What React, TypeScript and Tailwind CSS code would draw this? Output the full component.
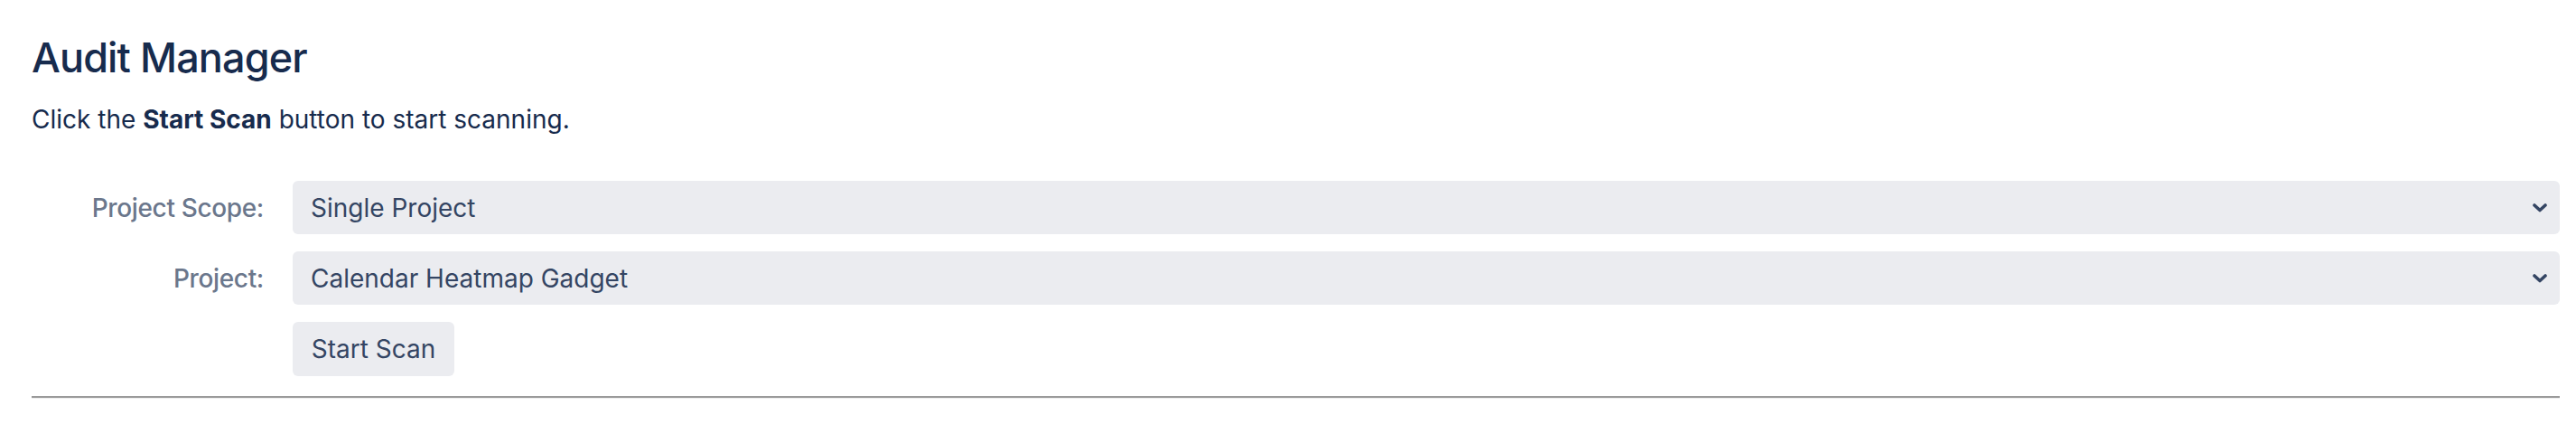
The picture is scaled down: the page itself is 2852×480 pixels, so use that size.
import React from "react";

function Chevron() {
  return (
    <svg width="16" height="10" viewBox="0 0 16 10" className="shrink-0">
      <path d="M2 2 L8 7.5 L14 2" fill="none" stroke="#344563" strokeWidth="3.6" strokeLinecap="round" strokeLinejoin="round" />
    </svg>
  );
}

function Row({ label, children }: { label: string; children: React.ReactNode }) {
  return (
    <div className="flex items-center gap-[32px]">
      <div className="w-[257px] shrink-0 text-right text-[28px] leading-[40px] font-medium tracking-[-0.35px] text-[#6B778C]">{label}</div>
      <div className="flex-1 min-w-0">{children}</div>
    </div>
  );
}

function SelectBox({ value }: { value: string }) {
  return (
    <div className="flex h-[59px] items-center justify-between rounded-[6px] bg-[#EBECF0] pl-[20px] pr-[14px]">
      <span className="text-[28px] leading-[40px] text-[#344563]">{value}</span>
      <Chevron />
    </div>
  );
}

export default function App() {
  return (
    <div className="min-h-[480px] bg-white pl-[35px] pr-[18px] pt-[36px]" style={{ fontFamily: "Inter, 'Noto Sans', sans-serif" }}>
      <h1 className="text-[45px] leading-[56px] font-medium text-[#172B4D] tracking-[-0.9px]">Audit Manager</h1>
      <p className="mt-[20px] text-[28px] leading-[40px] text-[#172B4D]">
        Click the <strong className="font-bold">Start Scan</strong> button to start scanning.
      </p>
      <div className="mt-[48px] flex flex-col gap-[19px]">
        <Row label="Project Scope:">
          <SelectBox value="Single Project" />
        </Row>
        <Row label="Project:">
          <SelectBox value="Calendar Heatmap Gadget" />
        </Row>
        <div className="flex gap-[32px]">
          <div className="w-[257px] shrink-0" />
          <button className="flex h-[60px] w-[179px] items-center justify-center rounded-[6px] bg-[#EBECF0] text-[28px] leading-[40px] text-[#344563]">
            Start Scan
          </button>
        </div>
      </div>
      <div className="mt-[22px] h-[3px] border-t-2 border-b border-t-[#9A9A9A] border-b-[#EEEEEE]" />
    </div>
  );
}
